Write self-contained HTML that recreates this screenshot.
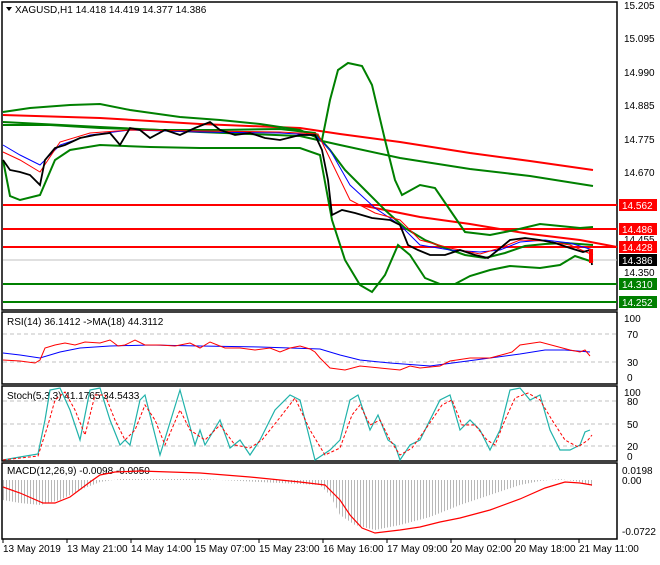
<!DOCTYPE html>
<html><head><meta charset="utf-8"><style>
body{margin:0;background:#fff;width:660px;height:560px;overflow:hidden;font-family:"Liberation Sans",sans-serif}
</style></head><body>
<svg width="660" height="560" viewBox="0 0 660 560" xmlns="http://www.w3.org/2000/svg" font-family="Liberation Sans, sans-serif" font-size="10">
<defs>
<pattern id="hp" width="3" height="10" patternUnits="userSpaceOnUse"><rect x="0" width="1" height="10" fill="#b8b8b8"/></pattern>
</defs>
<rect width="660" height="560" fill="#fff"/>
<g fill="none" stroke="#000" stroke-width="1.5">
<rect x="2" y="2" width="615" height="308"/>
<rect x="2" y="312" width="615" height="72"/>
<rect x="2" y="386" width="615" height="75"/>
<rect x="2" y="463" width="615" height="76"/>
</g>
<g stroke="#c0c0c0" stroke-dasharray="4,3">
<line x1="3" x2="616" y1="334" y2="334"/><line x1="3" x2="616" y1="362" y2="362"/>
<line x1="3" x2="616" y1="401" y2="401"/><line x1="3" x2="616" y1="424" y2="424"/><line x1="3" x2="616" y1="446" y2="446"/>
</g>
<line x1="3" x2="617" y1="260" y2="260" stroke="#c0c0c0"/>
<g stroke-width="2">
<line x1="3" x2="617" y1="205" y2="205" stroke="#f00"/>
<line x1="3" x2="617" y1="229" y2="229" stroke="#f00"/>
<line x1="3" x2="617" y1="247" y2="247" stroke="#f00"/>
<line x1="3" x2="617" y1="284" y2="284" stroke="#008000"/>
<line x1="3" x2="617" y1="302" y2="302" stroke="#008000"/>
</g>
<polyline fill="none" stroke="#f00" stroke-width="2" points="3,115 100,118 200,124 300,128 340,134 400,142 470,153 530,161 593,170"/>
<polyline fill="none" stroke="#008000" stroke-width="2" points="3,122 100,127 200,132 300,136 340,145 400,158 470,169 530,176 593,186"/>
<polyline fill="none" stroke="#f00" stroke-width="2" points="360,205 420,217 470,224 530,234 580,240 617,247"/>
<g fill="none" stroke="#008000" stroke-width="2">
<polyline points="3,112 30,108 70,105 100,104 130,110 180,117 220,120 260,124 300,130 322,140 330,100 338,70 348,63 362,66 372,85 385,140 395,180 402,195 420,185 435,188 450,210 465,232 490,235 515,230 540,224 560,226 580,228 593,227"/>
<polyline points="3,160 10,196 20,200 40,195 55,160 70,150 100,145 150,147 200,148 250,148 300,148 320,155 332,220 345,260 360,285 372,292 385,275 398,245 410,255 425,278 440,284 455,284 470,276 490,270 510,266 540,268 560,265 575,256 593,262"/>
<polyline points="3,125 50,125 100,128 160,130 220,130 280,129 315,133 330,150 345,170 365,190 385,210 405,228 425,240 445,248 465,255 485,258 505,253 525,246 545,244 565,243 593,245"/>
</g>
<polyline fill="none" stroke="#00f" stroke-width="1" points="3,145 20,155 40,165 60,145 90,135 130,130 200,132 280,133 315,135 330,150 350,185 375,208 400,225 420,245 450,250 480,252 500,250 520,242 545,240 570,243 593,250"/>
<polyline fill="none" stroke="#f00" stroke-width="1" points="3,152 20,160 40,172 60,142 90,133 130,130 200,131 280,132 318,134 333,165 350,200 375,213 400,220 420,240 450,248 480,254 500,248 520,240 545,241 570,245 593,255"/>
<polyline fill="none" stroke="#000" stroke-width="1.8" points="3,160 10,170 20,172 30,175 40,185 45,160 55,148 65,145 80,138 95,135 110,133 120,145 130,128 140,130 150,138 165,130 180,135 195,128 210,122 220,130 235,135 250,133 265,138 280,140 300,135 315,135 322,150 328,180 332,215 342,210 355,213 372,218 390,220 400,225 408,245 418,250 430,255 445,255 460,250 475,255 488,258 498,250 510,240 525,238 540,240 555,243 570,248 583,252 590,250 592,265"/>
<rect x="589" y="249" width="4" height="14" fill="#f00"/>
<g fill="#000" font-size="10">
<text x="624" y="9">15.205</text>
<text x="624" y="42">15.095</text>
<text x="624" y="76">14.990</text>
<text x="624" y="109">14.885</text>
<text x="624" y="143">14.775</text>
<text x="624" y="176">14.670</text>
<text x="624" y="243">14.455</text>
<text x="624" y="276">14.350</text>
</g>
<g font-size="10" fill="#fff">
<rect x="619" y="199" width="38" height="12" fill="#f00"/><text x="622" y="209">14.562</text>
<rect x="619" y="223" width="38" height="12" fill="#f00"/><text x="622" y="233">14.486</text>
<rect x="619" y="241" width="38" height="12" fill="#f00"/><text x="622" y="251">14.428</text>
<rect x="619" y="254" width="38" height="12" fill="#000"/><text x="622" y="264">14.386</text>
<rect x="619" y="278" width="38" height="12" fill="#008000"/><text x="622" y="288">14.310</text>
<rect x="619" y="296" width="38" height="12" fill="#008000"/><text x="622" y="306">14.252</text>
</g>
<g fill="#000" font-size="10">
<text x="624" y="322">100</text><text x="627" y="338">70</text><text x="627" y="366">30</text><text x="627" y="381">0</text>
<text x="624" y="396">100</text><text x="627" y="405">80</text><text x="627" y="428">50</text><text x="627" y="450">20</text><text x="627" y="460">0</text>
<text x="622" y="474">0.0198</text><text x="622" y="484">0.00</text><text x="622" y="535">-0.0722</text>
</g>
<polygon points="6,7 12,7 9,11" fill="#000"/>
<text x="15" y="13" fill="#000">XAGUSD,H1  14.418 14.419 14.377 14.386</text>
<text x="7" y="325" fill="#000">RSI(14) 36.1412  -&gt;MA(18) 44.3112</text>
<polyline fill="none" stroke="#00f" points="3,353 20,355 40,358 60,352 80,348 110,346 150,345 200,346 260,347 320,349 340,355 360,360 390,363 430,366 460,362 490,358 520,354 545,350 565,350 590,352"/>
<polyline fill="none" stroke="#f00" points="3,360 20,361 35,363 40,360 45,348 55,345 65,343 75,345 85,342 100,343 110,340 118,346 125,345 135,340 145,345 160,345 175,346 190,343 200,348 210,342 225,348 240,348 255,350 270,348 280,352 290,348 300,346 310,349 315,352 320,358 330,368 345,370 360,366 380,368 400,370 410,366 420,368 440,366 450,361 470,358 490,358 505,354 512,352 520,345 540,342 555,346 570,350 580,352 585,350 590,356"/>
<text x="7" y="399" fill="#000">Stoch(5,3,3) 41.1765 34.5433</text>
<polyline fill="none" stroke="#20b2aa" stroke-width="1.2" points="3,460 20,457 38,454 45,420 50,390 60,388 70,410 80,440 90,390 100,388 110,420 120,445 125,440 130,445 140,400 145,395 160,455 180,390 195,445 200,430 205,445 220,420 230,448 240,440 250,455 260,440 275,410 290,395 300,400 315,460 330,450 340,440 350,400 358,395 370,430 378,415 388,440 395,445 400,460 410,445 420,440 440,400 450,395 460,430 470,420 480,430 490,450 500,430 510,390 520,388 530,400 540,395 550,430 560,450 570,450 580,445 585,432 590,430"/>
<polyline fill="none" stroke="#f00" stroke-dasharray="3,2" points="3,460 38,456 48,425 55,400 65,392 75,410 85,435 95,395 105,395 115,420 125,440 135,430 145,405 155,420 165,445 180,410 190,430 205,440 220,425 235,445 250,448 262,440 278,420 295,398 310,430 325,455 340,448 352,415 360,405 370,425 380,420 390,440 400,455 412,448 425,430 442,405 452,400 462,425 475,425 487,440 495,445 505,420 515,398 528,393 540,400 552,420 565,440 578,447 588,440 592,435"/>
<text x="7" y="474" fill="#000">MACD(12,26,9) -0.0098 -0.0050</text>
<polygon fill="url(#hp)" points="3,480 3,500 20,503 40,505 60,500 80,490 100,482 120,479 200,479 260,482 320,485 330,495 340,515 355,525 375,530 400,525 430,517 460,505 490,495 520,485 540,481 560,479 580,482 592,486 592,480"/>
<polyline fill="none" stroke="#f00" stroke-width="1.2" points="3,487 20,493 43,503 55,503 70,497 90,482 100,475 115,472 140,471 200,473 250,477 300,482 325,485 340,500 350,515 362,528 375,533 400,530 420,527 440,522 460,518 490,510 520,499 545,488 565,482 580,483 592,485"/>
<g stroke="#000"><line x1="3" x2="3" y1="539" y2="543"/><line x1="67" x2="67" y1="539" y2="543"/><line x1="131" x2="131" y1="539" y2="543"/><line x1="195" x2="195" y1="539" y2="543"/><line x1="259" x2="259" y1="539" y2="543"/><line x1="323" x2="323" y1="539" y2="543"/><line x1="387" x2="387" y1="539" y2="543"/><line x1="451" x2="451" y1="539" y2="543"/><line x1="515" x2="515" y1="539" y2="543"/><line x1="579" x2="579" y1="539" y2="543"/></g>
<g fill="#000" font-size="10">
<text x="3" y="552">13 May 2019</text><text x="67" y="552">13 May 21:00</text><text x="131" y="552">14 May 14:00</text><text x="195" y="552">15 May 07:00</text><text x="259" y="552">15 May 23:00</text><text x="323" y="552">16 May 16:00</text><text x="387" y="552">17 May 09:00</text><text x="451" y="552">20 May 02:00</text><text x="515" y="552">20 May 18:00</text><text x="579" y="552">21 May 11:00</text>
</g>
</svg>
</body></html>
